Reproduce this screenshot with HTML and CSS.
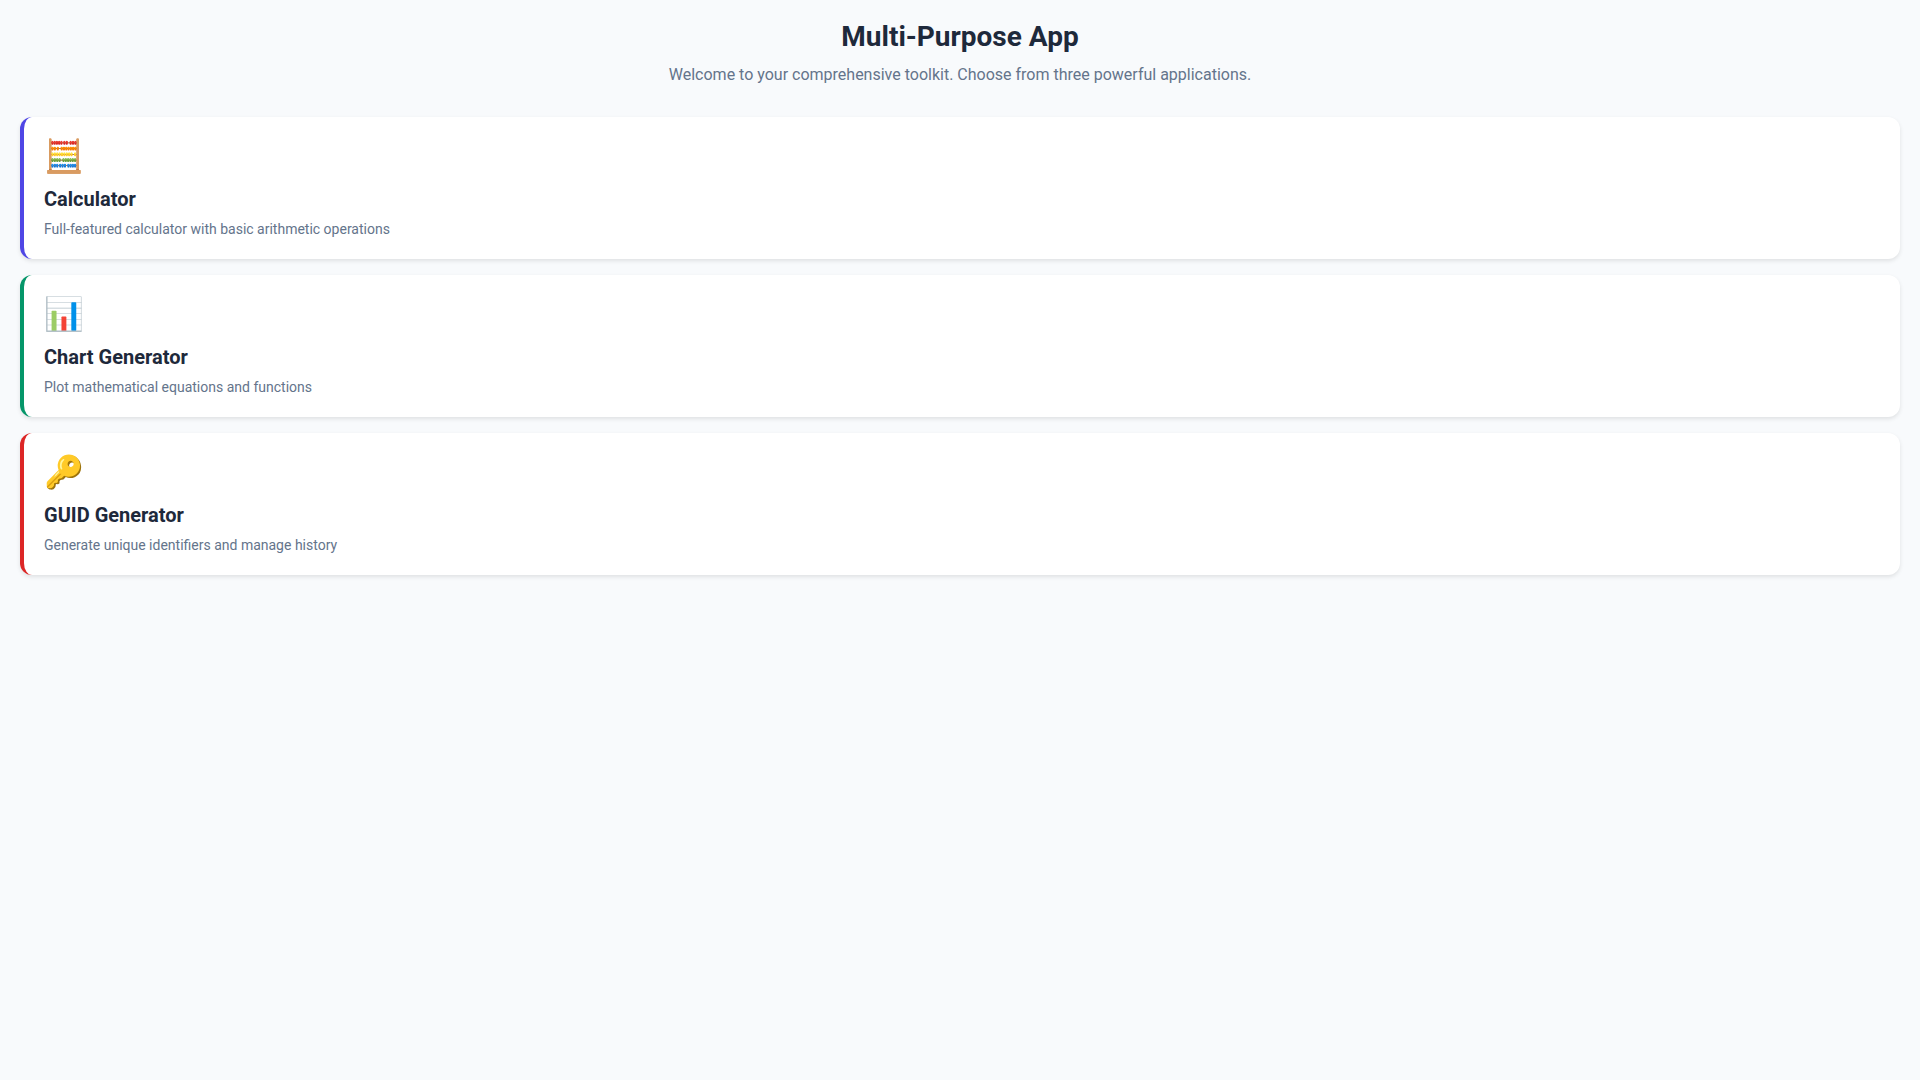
FILE: index.html
```html
<!DOCTYPE html>
<html lang="en">
<head>
<meta charset="utf-8">
<meta name="viewport" content="width=device-width, initial-scale=1">
<title>Multi-Purpose App</title>
<link rel="stylesheet" href="styles.css">
</head>
<body>
<main class="home">
  <header class="header">
    <h1 class="title">Multi-Purpose App</h1>
    <p class="subtitle">Welcome to your comprehensive toolkit. Choose from three powerful applications.</p>
  </header>
  <nav class="cards">
    <a class="card card-calculator" href="#calculator">
      <span class="card-icon">🧮</span>
      <h2 class="card-title">Calculator</h2>
      <p class="card-text">Full-featured calculator with basic arithmetic operations</p>
    </a>
    <a class="card card-chart" href="#chart">
      <span class="card-icon">📊</span>
      <h2 class="card-title">Chart Generator</h2>
      <p class="card-text">Plot mathematical equations and functions</p>
    </a>
    <a class="card card-guid" href="#guid">
      <span class="card-icon">🔑</span>
      <h2 class="card-title">GUID Generator</h2>
      <p class="card-text">Generate unique identifiers and manage history</p>
    </a>
  </nav>
</main>
</body>
</html>
```
FILE: styles.css
```css
* { box-sizing: border-box; margin: 0; }
body {
  background: #f8fafc;
  color: #1e293b;
  font-family: Roboto, sans-serif;
}
.home { padding: 20px; }
.header { text-align: center; margin-bottom: 32px; }
.title { font-size: 28px; line-height: 33px; font-weight: 700; margin-bottom: 12px; }
.subtitle { font-size: 16px; line-height: 20px; color: #64748b; }
.cards { display: flex; flex-direction: column; gap: 16px; }
.card {
  display: block;
  padding: 20px;
  background: #fff;
  border-left: 4px solid;
  border-radius: 12px;
  box-shadow: 0 2px 4px rgba(0, 0, 0, 0.1);
  text-decoration: none;
}
.card-calculator { border-left-color: #4f46e5; }
.card-chart { border-left-color: #059669; }
.card-guid { border-left-color: #dc2626; }
.card-icon { display: block; font-size: 32px; line-height: 38px; margin-bottom: 12px; color: #1e293b; }
.card-title { font-size: 20px; line-height: 24px; font-weight: 700; margin-bottom: 8px; color: #1e293b; }
.card-text { font-size: 14px; line-height: 20px; color: #64748b; }
```
